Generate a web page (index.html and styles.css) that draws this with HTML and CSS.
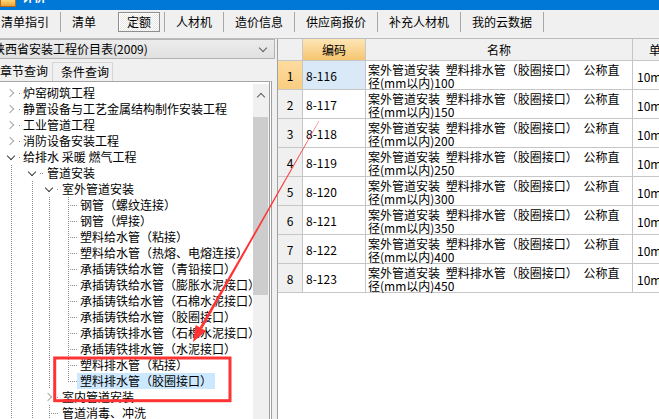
FILE: index.html
```html
<!DOCTYPE html>
<html lang="zh-CN">
<head>
    <meta charset="UTF-8">
    <title>定额查询</title>
    <link rel="stylesheet" href="styles.css">
</head>
<body>
<div class="window">
    <div class="titlebar">
        <span class="app-icon"></span>
        <span class="app-title">计价</span>
    </div>

    <div class="tabbar">
        <div class="tab">清单指引</div>
        <div class="tab pre">清单</div>
        <div class="tab on"><span>定额</span></div>
        <div class="tab">人材机</div>
        <div class="tab">造价信息</div>
        <div class="tab">供应商报价</div>
        <div class="tab">补充人材机</div>
        <div class="tab">我的云数据</div>
    </div>

    <div class="main">
        <div class="side">
            <div class="combo">
                <span class="combo-text">陕西省安装工程价目表(2009)</span>
                <i class="combo-arrow"></i>
            </div>
            <div class="subtabs">
                <div class="subtab on">章节查询</div>
                <div class="subtab">条件查询</div>
            </div>
            <div class="treebox">
                <div class="tree">
                    <div class="node lv0"><i class="tw shut"></i><i class="cn"></i><span class="lbl">炉窑砌筑工程</span></div>
                    <div class="node lv0"><i class="tw shut"></i><i class="cn"></i><span class="lbl">静置设备与工艺金属结构制作安装工程</span></div>
                    <div class="node lv0"><i class="tw shut"></i><i class="cn"></i><span class="lbl">工业管道工程</span></div>
                    <div class="node lv0"><i class="tw shut"></i><i class="cn"></i><span class="lbl">消防设备安装工程</span></div>
                    <div class="node lv0"><i class="tw open"></i><i class="cn"></i><span class="lbl">给排水 采暖 燃气工程</span></div>
                    <div class="kids k0">
                        <div class="node lv1"><i class="tw open"></i><i class="cn"></i><span class="lbl">管道安装</span></div>
                        <div class="kids k1">
                            <div class="node lv2"><i class="tw open"></i><i class="cn"></i><span class="lbl">室外管道安装</span></div>
                            <div class="kids k2">
                                <div class="node lv3"><i class="cn"></i><span class="lbl">钢管（螺纹连接）</span></div>
                                <div class="node lv3"><i class="cn"></i><span class="lbl">钢管（焊接）</span></div>
                                <div class="node lv3"><i class="cn"></i><span class="lbl">塑料给水管（粘接）</span></div>
                                <div class="node lv3"><i class="cn"></i><span class="lbl">塑料给水管（热熔、电熔连接）</span></div>
                                <div class="node lv3"><i class="cn"></i><span class="lbl">承插铸铁给水管（青铅接口）</span></div>
                                <div class="node lv3"><i class="cn"></i><span class="lbl">承插铸铁给水管（膨胀水泥接口）</span></div>
                                <div class="node lv3"><i class="cn"></i><span class="lbl">承插铸铁给水管（石棉水泥接口）</span></div>
                                <div class="node lv3"><i class="cn"></i><span class="lbl">承插铸铁给水管（胶圈接口）</span></div>
                                <div class="node lv3"><i class="cn"></i><span class="lbl">承插铸铁排水管（石棉水泥接口）</span></div>
                                <div class="node lv3"><i class="cn"></i><span class="lbl">承插铸铁排水管（水泥接口）</span></div>
                                <div class="node lv3"><i class="cn"></i><span class="lbl">塑料排水管（粘接）</span></div>
                                <div class="node lv3 selected"><i class="cn"></i><span class="lbl">塑料排水管（胶圈接口）</span></div>
                            </div>
                            <div class="node lv2"><i class="tw shut"></i><i class="cn"></i><span class="lbl">室内管道安装</span></div>
                            <div class="node lv2 leaf"><i class="cn"></i><span class="lbl">管道消毒、冲洗</span></div>
                        </div>
                    </div>
                </div>
                <div class="vscroll">
                    <div class="vs-btn"><i></i></div>
                    <div class="vs-thumb"></div>
                </div>
            </div>
        </div>

        <div class="grid">
            <table class="quota">
                <thead>
                    <tr>
                        <th class="num"></th>
                        <th class="code sorted">编码</th>
                        <th class="name">名称</th>
                        <th class="unit">单位</th>
                    </tr>
                </thead>
                <tbody>
                    <tr class="current">
                        <td class="num">1</td>
                        <td class="code">8-116</td>
                        <td class="name">案外管道安装 塑料排水管（胶圈接口） 公称直径(mm以内)100</td>
                        <td class="unit">10m</td>
                    </tr>
                    <tr>
                        <td class="num">2</td>
                        <td class="code">8-117</td>
                        <td class="name">案外管道安装 塑料排水管（胶圈接口） 公称直径(mm以内)150</td>
                        <td class="unit">10m</td>
                    </tr>
                    <tr>
                        <td class="num">3</td>
                        <td class="code">8-118</td>
                        <td class="name">案外管道安装 塑料排水管（胶圈接口） 公称直径(mm以内)200</td>
                        <td class="unit">10m</td>
                    </tr>
                    <tr>
                        <td class="num">4</td>
                        <td class="code">8-119</td>
                        <td class="name">案外管道安装 塑料排水管（胶圈接口） 公称直径(mm以内)250</td>
                        <td class="unit">10m</td>
                    </tr>
                    <tr>
                        <td class="num">5</td>
                        <td class="code">8-120</td>
                        <td class="name">案外管道安装 塑料排水管（胶圈接口） 公称直径(mm以内)300</td>
                        <td class="unit">10m</td>
                    </tr>
                    <tr>
                        <td class="num">6</td>
                        <td class="code">8-121</td>
                        <td class="name">案外管道安装 塑料排水管（胶圈接口） 公称直径(mm以内)350</td>
                        <td class="unit">10m</td>
                    </tr>
                    <tr>
                        <td class="num">7</td>
                        <td class="code">8-122</td>
                        <td class="name">案外管道安装 塑料排水管（胶圈接口） 公称直径(mm以内)400</td>
                        <td class="unit">10m</td>
                    </tr>
                    <tr>
                        <td class="num">8</td>
                        <td class="code">8-123</td>
                        <td class="name">案外管道安装 塑料排水管（胶圈接口） 公称直径(mm以内)450</td>
                        <td class="unit">10m</td>
                    </tr>
                </tbody>
            </table>
        </div>
    </div>

    <!-- red markup drawn on top of the screenshot -->
    <svg class="marks" width="659" height="419" viewBox="0 0 659 419">
        <rect x="54.7" y="358" width="175.3" height="42.7" fill="none" stroke="#f33" stroke-width="3"/>
        <polygon fill="#f33" points="319.2,121.1 318.8,120.9 199.6,327.4 202.2,328.8"/>
        <polygon fill="#f33" points="193,342 195.7,325.1 206.1,331.1"/>
    </svg>
</div>
</body>
</html>
```

FILE: styles.css
```css
* {
    box-sizing: border-box;
}
body {
    margin: 0;
    font-family: "Noto Sans CJK SC", sans-serif;
    font-size: 12px;
    color: #000;
    background: #f0f0f0;
}
.window {
    position: relative;
    width: 659px;
    height: 419px;
    overflow: hidden;
    background: #f0f0f0;
}

/* title bar (only its lower edge is visible) */
.titlebar {
    height: 10px;
    background: #0078d7;
    display: flex;
    overflow: hidden;
}
.app-icon {
    width: 16px;
    height: 7px;
    background: linear-gradient(#fbd77a, #eda437);
    border: 1px solid #b86b1c;
    border-top: none;
}
.app-title {
    color: #fff;
    margin: -10px 0 0 6px;
    line-height: 14px;
    font-weight: bold;
}

/* top tabs */
.tabbar {
    display: flex;
    height: 29px;
    padding-top: 2px;
    margin-left: -10px;
    border-bottom: 1px solid #bcbcbc;
}
.tab {
    height: 20px;
    line-height: 20px;
    padding: 0 11px;
    border-right: 1px solid #a8a8a8;
    white-space: nowrap;
}
.tab.pre {
    border-right: none;
}
.tab.on {
    padding: 0 4px 0 11px;
}
.tab.on span {
    display: block;
    height: 20px;
    line-height: 18px;
    padding: 0 8px;
    border: 1px solid #8d8d8d;
    box-shadow: inset 1px 1px #fff;
    background: repeating-conic-gradient(#fff 0 25%, #e6e6e6 0 50%) 0 0 / 2px 2px;
}

.main {
    display: flex;
    height: 380px;
}

/* left side */
.side {
    width: 277px;
    flex: none;
    display: flex;
    flex-direction: column;
}
.combo {
    display: flex;
    align-items: center;
    height: 20px;
    width: 276px;
    margin-left: -1px;
    border: 1px solid #b4b4b4;
    background: linear-gradient(#ececec, #e1e1e1);
    overflow: hidden;
    white-space: nowrap;
}
.combo-text {
    flex: 1;
    margin-left: -7px;
    line-height: 18px;
}
.combo-arrow {
    width: 6px;
    height: 6px;
    margin: -3px 8px 0 0;
    border-right: 1px solid #606060;
    border-bottom: 1px solid #606060;
    transform: rotate(45deg);
}
.subtabs {
    display: flex;
    align-items: flex-end;
    height: 22px;
    margin-left: -5px;
}
.subtab {
    height: 19px;
    line-height: 18px;
    padding: 0 3px 0 8px;
    border: 1px solid #d6d6d6;
    border-bottom: none;
    white-space: nowrap;
}
.subtab.on {
    height: 21px;
    line-height: 20px;
    padding: 0 3px 0 4px;
    border-color: #f0f0f0;
}

.treebox {
    flex: 1;
    display: flex;
    width: 272px;
    background: #fff;
    border-top: 1px solid #a5a5a5;
    border-right: 3px double #a0a0a0;
    overflow: hidden;
}
.tree {
    flex: 1;
    min-width: 0;
    padding-top: 3px;
    overflow: hidden;
}
.node {
    display: flex;
    align-items: center;
    height: 16px;
    white-space: nowrap;
}
.tw {
    flex: none;
    display: flex;
    align-items: center;
    justify-content: center;
    width: 16px;
    height: 16px;
    background: #fff;
}
.tw::before {
    content: "";
    width: 5px;
    height: 5px;
    border-right: 1.5px solid;
    border-bottom: 1.5px solid;
}
.tw.shut::before {
    color: #a8a8a8;
    margin-left: -3px;
    transform: rotate(-45deg);
}
.tw.open::before {
    color: #3c3c3c;
    margin-top: -3px;
    transform: rotate(45deg);
}
.cn {
    flex: none;
    height: 16px;
    background: repeating-linear-gradient(to right, #8c8c8c 0 1px, transparent 1px 2px) 0 50% / 100% 1px no-repeat;
}
.lbl {
    padding: 0 3px;
    line-height: 16px;
}
.lv0 {
    padding-left: 3px;
}
.lv0 .cn {
    width: 1px;
}
.lv1 {
    padding-left: 24px;
}
.lv1 .cn {
    width: 4px;
}
.lv2 {
    padding-left: 41px;
}
.lv2 .cn {
    width: 2px;
}
.lv2.leaf {
    padding-left: 49px;
}
.lv2.leaf .cn {
    width: 10px;
}
.lv3 {
    padding-left: 68px;
}
.lv3 .cn {
    width: 9px;
}
.selected .lbl {
    background: #cce8ff;
}

/* dotted guide lines between siblings */
.k0 {
    background:
        repeating-linear-gradient(#8c8c8c 0 1px, transparent 1px 2px) 11px 0 / 1px 100% no-repeat,
        repeating-linear-gradient(#8c8c8c 0 1px, transparent 1px 2px) 32px 0 / 1px 100% no-repeat;
}
.k1 {
    background: repeating-linear-gradient(#8c8c8c 0 1px, transparent 1px 2px) 49px 0 / 1px 100% no-repeat;
}
.k2 {
    background: repeating-linear-gradient(#8c8c8c 0 1px, transparent 1px 2px) 68px 0 / 1px calc(100% - 8px) no-repeat;
}

.vscroll {
    flex: none;
    width: 16px;
    margin-top: 2px;
    background: #f0f0f0;
}
.vs-btn {
    display: flex;
    align-items: center;
    justify-content: center;
    height: 22px;
}
.vs-btn i {
    width: 6px;
    height: 6px;
    margin-top: 3px;
    border-left: 1.5px solid #606060;
    border-top: 1.5px solid #606060;
    transform: rotate(45deg);
}
.vs-thumb {
    width: 15px;
    height: 178px;
    margin-top: 11px;
    background: #cdcdcd;
}

/* right grid */
.grid {
    flex: 1;
    border-left: 1px solid #a0a0a0;
    background: #fff;
    overflow: hidden;
}
.quota {
    border-collapse: separate;
    border-spacing: 0;
    table-layout: fixed;
    width: 411px;
}
.quota th,
.quota td {
    padding: 0;
    border-right: 1px solid #c6c6c6;
    border-bottom: 1px solid #c6c6c6;
    font-weight: normal;
    white-space: nowrap;
}
.quota th {
    height: 22px;
    background: #f0f0f0;
    text-align: center;
}
.quota th.sorted {
    background: linear-gradient(#fde6b8, #f6c56e);
}
.quota th.unit {
    text-align: left;
    padding-left: 16px;
}
.quota td {
    height: 29px;
}
.num {
    width: 25px;
    text-align: center;
}
td.num {
    background: #f0f0f0;
}
.current td.num {
    background: linear-gradient(#fddca0, #f9cd80);
}
.current td.code {
    background: #d9e9f8;
}
.code {
    width: 63px;
}
td.code {
    padding-left: 3px;
}
.name {
    width: 267px;
}
.quota td.name {
    vertical-align: top;
    padding: 2px 4px 0 2px;
    line-height: 13px;
    white-space: normal;
    word-spacing: 3px;
}
.unit {
    width: 56px;
}
.quota td.unit {
    padding: 2px 0 0 4px;
}

.marks {
    position: absolute;
    left: 0;
    top: 0;
    pointer-events: none;
}
```
